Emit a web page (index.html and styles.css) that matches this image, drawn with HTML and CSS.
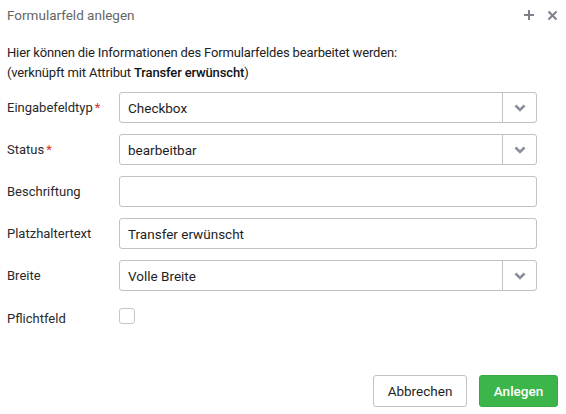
FILE: index.html
```html
<!DOCTYPE html>
<html lang="de">
<head>
<meta charset="utf-8">
<link rel="stylesheet" href="styles.css">
</head>
<body>
<div class="dialog">
  <div class="header">
    <span class="title">Formularfeld anlegen</span>
    <span class="tools">
      <svg width="12" height="12" viewBox="0 0 12 12"><path d="M6 1v10M1 6h10" stroke="#7c818c" stroke-width="2"/></svg>
      <svg width="11" height="11" viewBox="0 0 11 11"><path d="M1.5 1.5l8 8M9.5 1.5l-8 8" stroke="#7c818c" stroke-width="2"/></svg>
    </span>
  </div>
  <div class="intro">
    <p>Hier können die Informationen des Formularfeldes bearbeitet werden:</p>
    <p>(verknüpft mit Attribut <b>Transfer erwünscht</b>)</p>
  </div>
  <div class="form">
    <div class="row">
      <label>Eingabefeldtyp<span class="req">*</span></label>
      <div class="select"><span class="val">Checkbox</span><span class="arrow"><svg width="12" height="8" viewBox="0 0 12 8"><path d="M1.5 1.5l4.5 4.5 4.5-4.5" fill="none" stroke="#8a8f99" stroke-width="2.6"/></svg></span></div>
    </div>
    <div class="row">
      <label>Status<span class="req">*</span></label>
      <div class="select"><span class="val">bearbeitbar</span><span class="arrow"><svg width="12" height="8" viewBox="0 0 12 8"><path d="M1.5 1.5l4.5 4.5 4.5-4.5" fill="none" stroke="#8a8f99" stroke-width="2.6"/></svg></span></div>
    </div>
    <div class="row">
      <label>Beschriftung</label>
      <div class="input"></div>
    </div>
    <div class="row">
      <label>Platzhaltertext</label>
      <div class="input"><span class="val">Transfer erwünscht</span></div>
    </div>
    <div class="row">
      <label>Breite</label>
      <div class="select"><span class="val">Volle Breite</span><span class="arrow"><svg width="12" height="8" viewBox="0 0 12 8"><path d="M1.5 1.5l4.5 4.5 4.5-4.5" fill="none" stroke="#8a8f99" stroke-width="2.6"/></svg></span></div>
    </div>
    <div class="row check-row">
      <label>Pflichtfeld</label>
      <span class="checkbox"></span>
    </div>
  </div>
  <div class="footer">
    <button class="btn btn-default">Abbrechen</button>
    <button class="btn btn-primary">Anlegen</button>
  </div>
</div>
</body>
</html>
```
FILE: styles.css
```css
html, body {
  margin: 0;
  padding: 0;
  background: #fff;
}
body {
  font-family: Roboto, "Liberation Sans", sans-serif;
  font-size: 13px;
  color: #333;
  width: 566px;
  height: 414px;
  overflow: hidden;
}
.dialog {
  display: flex;
  flex-direction: column;
  height: 414px;
}
.header {
  display: flex;
  justify-content: space-between;
  align-items: center;
  height: 30px;
  padding: 0 8px 0 7px;
}
.title {
  color: #666;
  font-size: 13.5px;
}
.tools {
  display: flex;
  align-items: center;
  gap: 12px;
}
.tools svg { display: block; }
.intro {
  padding: 13px 7px 0;
}
.intro p {
  margin: 0;
  line-height: 20px;
  color: #222;
  letter-spacing: -0.15px;
}
.intro b {
  font-weight: 500;
  color: #111;
}
.form {
  display: flex;
  flex-direction: column;
  gap: 11px;
  padding: 9px 29px 0 7px;
}
.row {
  display: flex;
  align-items: center;
  height: 31px;
}
.row label {
  width: 112px;
  flex: none;
  color: #2a2a2a;
}
.req {
  color: #e0302c;
  margin-left: 2px;
}
.input, .select {
  flex: 1;
  height: 31px;
  box-sizing: border-box;
  border: 1px solid #c2c2c2;
  border-radius: 3px;
  display: flex;
  align-items: center;
  background: #fff;
}
.val {
  flex: 1;
  padding-left: 8px;
  color: #1e1e1e;
  font-size: 13.5px;
}
.arrow {
  width: 33px;
  align-self: stretch;
  border-left: 1px solid #c2c2c2;
  display: flex;
  align-items: center;
  justify-content: center;
}
.arrow svg { display: block; }
.check-row {
  height: 24px;
  margin-top: 4px;
}
.checkbox {
  width: 16px;
  height: 16px;
  box-sizing: border-box;
  border: 1px solid #c6c6c6;
  border-radius: 3px;
  margin-top: -5px;
}
.footer {
  margin-top: auto;
  display: flex;
  justify-content: flex-end;
  gap: 12px;
  padding: 0 8px 7px 0;
}
.btn {
  height: 32px;
  box-sizing: border-box;
  border-radius: 3px;
  font-family: Roboto, "Liberation Sans", sans-serif;
  font-size: 13.5px;
  padding: 0;
  cursor: pointer;
}
.btn-default {
  width: 94px;
  background: #fff;
  border: 1px solid #c2c2c2;
  color: #1e1e1e;
}
.btn-primary {
  width: 79px;
  background: #3cb54a;
  border: 1px solid #37a843;
  color: #fff;
  font-weight: 500;
}
```
